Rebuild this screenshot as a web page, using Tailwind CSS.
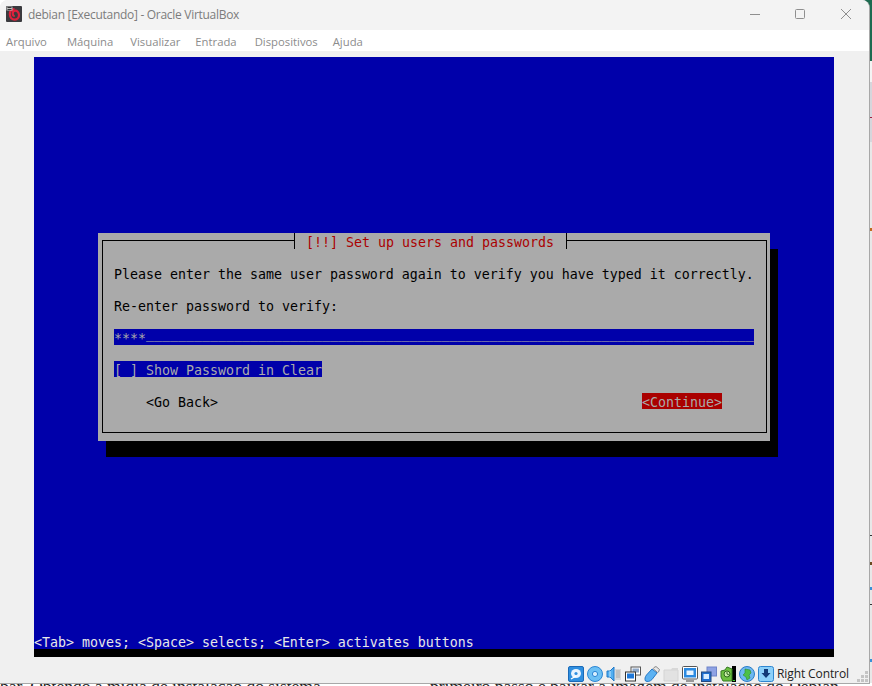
<!DOCTYPE html>
<html lang="pt">
<head>
<meta charset="utf-8">
<script src="https://cdn.jsdelivr.net/npm/@tailwindcss/browser@4"></script>
<title>debian [Executando] - Oracle VirtualBox</title>
</head>
<body class="bg-white">
<div class="relative w-[872px] h-[686px] overflow-hidden bg-white font-['Open_Sans','Noto_Sans',sans-serif]">
  <!-- desktop behind the window, right -->
  <div class="absolute right-0 top-0 w-[3px] h-full flex flex-col bg-[#e8e8e8]">
    <div class="h-[61px] bg-[#1d6b50]"></div>
    <div class="h-[21px] bg-[#f4f4f4]"></div>
    <div class="h-[36px] bg-[#d6d6dc] border-b border-[#a02040]"></div>
    <div class="h-[24px] bg-[#d6d6dc]"></div>
    <div class="mt-[86px] h-[3px] bg-[#c06a20]"></div>
    <div class="mt-[304px] h-px bg-[#333]"></div>
    <div class="mt-[26px] h-[3px] bg-[#6a4a20]"></div>
    <div class="mt-[22px] h-[3px] bg-[#3a90d8]"></div>
    <div class="mt-[14px] h-px bg-[#333]"></div>
    <div class="mt-[54px] h-[3px] bg-[#3a90d8]"></div>
  </div>
  <div class="absolute right-0 top-0 w-[20px] h-[20px] bg-[#1d6b50]"></div>
  <!-- document text behind the window, bottom -->
  <div class="absolute left-0 top-[683px] w-full h-[3px] overflow-hidden bg-white">
    <div class="flex mt-[-6px] text-[17.5px] leading-[18px] text-[#222] font-['Liberation_Serif',serif] whitespace-nowrap">
      <span class="w-[430px]">bar. Obtendo a mídia de instalação do sistema</span>
      <span>primeiro passo é baixar a imagem de instalação do Debian</span>
    </div>
  </div>
  <!-- window -->
  <div class="absolute left-0 top-0 w-[870px] h-[684px] bg-[#f0f0f0] rounded-t-lg border-r border-b border-[#a8a8a8] flex flex-col overflow-hidden">
    <div class="h-[30px] shrink-0 flex items-center bg-[#f3f3f3]">
      <svg class="ml-[6px] mt-[-2px] w-4 h-4" viewBox="0 0 16 16">
        <rect width="16" height="16" rx="1" fill="#3a3a3e"/>
        <path d="M8.500 3.200C5.400 3 3.600 5.400 3.800 8.400c.2 3 2.200 5.200 5 5.200 2.700 0 4.400-2.200 4.200-4.900-.2-2.500-1.900-4.300-3.800-4.100-1.600.2-2.600 1.500-2.500 3.100.1 1.400 1 2.300 2.100 2.300" fill="none" stroke="#e0203c" stroke-width="2.200"/>
        <rect x="0.500" y="0.500" width="6" height="4" fill="#bbb"/>
        <path d="M1.500 1.500h4M1.500 3.500h4" stroke="#333" stroke-width="1"/>
      </svg>
      <span class="ml-[6px] mt-[-1px] text-[12px] leading-4 text-[#7c7c7c] tracking-[-0.29px]">debian [Executando] - Oracle VirtualBox</span>
      <div class="ml-auto flex items-center mt-[-2px]">
        <svg class="w-[10px] h-[10px]" viewBox="0 0 10 10"><path d="M0 5.500h10" stroke="#8f8f8f"/></svg>
        <svg class="ml-[35px] w-[10px] h-[10px]" viewBox="0 0 10 10"><rect x=".5" y=".5" width="9" height="9" rx="1" fill="none" stroke="#8f8f8f"/></svg>
        <svg class="ml-[36px] mr-[18px] w-[10px] h-[10px]" viewBox="0 0 10 10"><path d="M0 0l10 10M10 0L0 10" stroke="#8f8f8f"/></svg>
      </div>
    </div>
    <nav class="h-[21px] shrink-0 bg-white flex items-center text-[11.3px] leading-4 text-[#8c8c8c] pl-[6px] pt-[2px]">
      <span>Arquivo</span>
      <span class="ml-[20px]">Máquina</span>
      <span class="ml-[17px]">Visualizar</span>
      <span class="ml-[15px]">Entrada</span>
      <span class="ml-[18px]">Dispositivos</span>
      <span class="ml-[15px]">Ajuda</span>
    </nav>
    <main class="ml-[34px] mt-[6px] w-[800px] h-[600px] shrink-0 bg-black font-['DejaVu_Sans_Mono',monospace] text-[13.29px] leading-5">
      <div class="h-[592px] bg-[#0000aa] flex flex-col pt-[176px]">
        <div class="relative ml-[64px] w-[672px] h-[208px] bg-[#aaaaaa] text-black shadow-[8px_16px_0_#000] pt-[7px] pl-[4px] pr-[3px]">
          <div class="absolute left-[196px] top-0 w-[273px] h-4 bg-[#aaaaaa] border-x border-black pl-[11px] text-[#aa0000] whitespace-pre z-10">[!!] Set up users and passwords</div>
          <div class="h-[193px] border border-black pt-6 pl-[11px]">
            <p class="h-4 whitespace-pre">Please enter the same user password again to verify you have typed it correctly.</p>
            <p class="h-4 mt-4 whitespace-pre">Re-enter password to verify:</p>
            <div class="h-4 mt-4 w-[640px] bg-[#0000aa] text-[#aaaaaa] whitespace-pre">****<span class="relative top-[-5px]">____________________________________________________________________________</span></div>
            <div class="h-4 mt-4 w-[208px] bg-[#0000aa] text-[#aaaaaa] whitespace-pre">[ ] Show Password in Clear</div>
            <div class="h-4 mt-4 flex pl-[32px]">
              <span class="whitespace-pre">&lt;Go Back&gt;</span>
              <span class="ml-[424px] w-[80px] bg-[#aa0000] text-[#aaaaaa] whitespace-pre">&lt;Continue&gt;</span>
            </div>
          </div>
        </div>
        <div class="mt-auto h-4 text-[#e8e8e8] whitespace-pre">&lt;Tab&gt; moves; &lt;Space&gt; selects; &lt;Enter&gt; activates buttons</div>
      </div>
    </main>
    <footer class="flex-1 flex items-center relative pl-[568px] pt-[7px]">
      <div class="flex gap-[3px] items-center">
        <svg class="w-4 h-4" viewBox="0 0 16 16"><rect x=".5" y=".5" width="15" height="15" rx="1.500" fill="#2f8fe0" stroke="#1a6ab8"/><ellipse cx="8" cy="7.500" rx="5" ry="4.600" fill="#e8f4ff"/><circle cx="8" cy="7.500" r="1.600" fill="#2f8fe0"/><path d="M3 13l5-3" stroke="#fff" stroke-width="1.400"/></svg>
        <svg class="w-4 h-4" viewBox="0 0 16 16"><circle cx="8" cy="8" r="7.500" fill="#6cc0f4" stroke="#2c86d4"/><circle cx="8" cy="8" r="2.600" fill="#d8efff" stroke="#2c86d4"/></svg>
        <svg class="w-4 h-4" viewBox="0 0 16 16"><rect x="9" y="3" width="6" height="11" fill="#d8d8d8"/><path d="M10 5h4M10 7h4M10 9h4M10 11h4" stroke="#aaa"/><path d="M1 5h3l4-4v14l-4-4H1z" fill="#52aef0" stroke="#1f78c8"/><path d="M4 5v6" stroke="#bfe4ff"/></svg>
        <svg class="w-4 h-4" viewBox="0 0 16 16"><rect x="6" y="1" width="9.500" height="8" fill="#fff" stroke="#555"/><rect x="7.500" y="2.500" width="6.500" height="4" fill="#8fa8c8"/><rect x=".5" y="6" width="10" height="9" fill="#fff" stroke="#333"/><rect x="2" y="7.500" width="7" height="5" fill="#1f78d8"/></svg>
        <svg class="w-4 h-4" viewBox="0 0 16 16"><path d="M1.500 15C.5 13 1 11 2.500 9L8 3l5 4-5 6.500C6 15.500 3.500 16 1.500 15z" fill="#5cb2f2" stroke="#2278c8"/><path d="M10 1.500l2-1 3.500 3-1 2.500-1 .5L9 2.500z" fill="#e6e6e6" stroke="#8a8a8a"/></svg>
        <svg class="w-4 h-4" viewBox="0 0 16 16"><path d="M1 4h14v11H1z" fill="#e2e2e2" stroke="#d4d4d4"/><path d="M8 4l1-2h6v2z" fill="#d8d8d8"/></svg>
        <svg class="w-4 h-4" viewBox="0 0 16 16"><rect x=".5" y=".5" width="15" height="12.500" rx="1" fill="#fff" stroke="#555"/><rect x="2" y="2" width="12" height="9.500" fill="#2b8ae0"/><rect x="4.500" y="4.500" width="7" height="4.500" fill="#e8f4ff"/><path d="M4 15h8" stroke="#999" stroke-width="2"/></svg>
        <svg class="w-4 h-4" viewBox="0 0 16 16"><rect x="6" y="1" width="9.500" height="9" fill="#8ea2e4" stroke="#6f84c8"/><rect x=".5" y="6" width="9.500" height="9.500" fill="#1f6fd0" stroke="#244a80"/><rect x="2.500" y="8" width="5.500" height="5" fill="#d8ecff"/></svg>
        <svg class="w-4 h-4" viewBox="0 0 16 16"><rect x="12" width="4" height="16" fill="#000"/><rect x="13" y="14" width="2" height="1" fill="#39d030"/><path d="M1 5l4-1 2-3 5 2v12H3l-2-4z" fill="#6cc040" stroke="#347a20"/><circle cx="7" cy="8" r="3" fill="#c8eea8" stroke="#2e6a1c"/><path d="M7 6v2l2 1" stroke="#2e6a1c" fill="none"/></svg>
        <svg class="w-4 h-4" viewBox="0 0 16 16"><circle cx="8" cy="8" r="7.500" fill="#6cb8f0" stroke="#2a7cc8"/><path d="M6 3l5 1 1 3-2 2 1 3-3 2-1-3-3-2 2-2z" fill="#4cc048" stroke="#2c8a30" stroke-width=".6"/></svg>
        <svg class="w-4 h-4" viewBox="0 0 16 16"><rect x=".5" y=".5" width="15" height="15" rx="2" fill="#8cd0fa" stroke="#2f86d0"/><path d="M6 3h4v4h2.500L8 12 3.500 7H6z" fill="#123a78"/></svg>
      </div>
      <span class="ml-[3px] mt-[1px] text-[12px] leading-4 text-[#222] tracking-[-0.1px]">Right Control</span>
      <svg class="absolute right-0 bottom-0 w-[12px] h-[12px]" viewBox="0 0 12 12" fill="#c4c4c4"><path d="M8 0h3v3H8zM4 4h3v3H4zM8 4h3v3H8zM0 8h3v3H0zM4 8h3v3H4zM8 8h3v3H8z"/></svg>
    </footer>
  </div>
</div>
</body>
</html>
